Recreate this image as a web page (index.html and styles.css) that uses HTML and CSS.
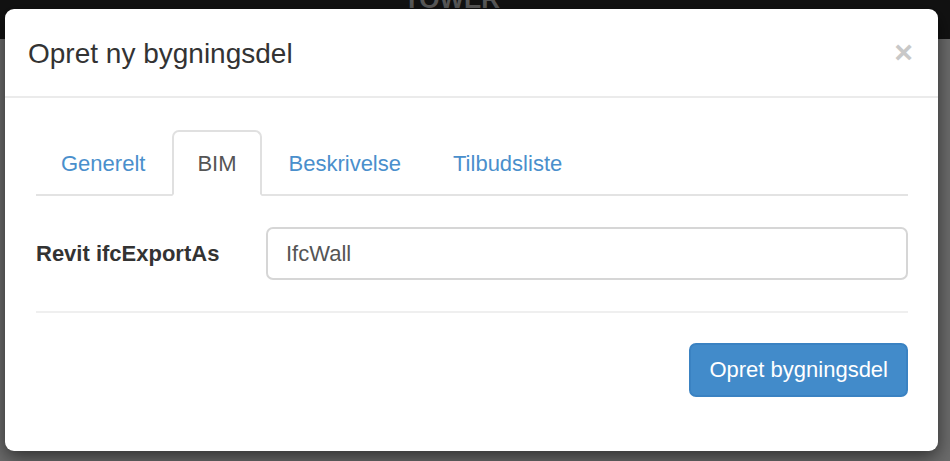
FILE: index.html
```html
<!DOCTYPE html>
<html lang="da">
<head>
<meta charset="utf-8">
<title>Opret ny bygningsdel</title>
<link rel="stylesheet" href="styles.css">
</head>
<body>
<div class="page">
  <div class="navbar"><span class="brand">TOWER</span></div>
  <div class="backdrop"></div>
</div>
<div class="modal">
  <div class="modal-header">
    <h4 class="modal-title">Opret ny bygningsdel</h4>
    <span class="close">&times;</span>
  </div>
  <div class="modal-body">
    <ul class="nav-tabs">
      <li><a>Generelt</a></li>
      <li class="active"><a>BIM</a></li>
      <li><a>Beskrivelse</a></li>
      <li><a>Tilbudsliste</a></li>
    </ul>
    <div class="tab-content">
      <div class="form-group">
        <label class="control-label">Revit ifcExportAs</label>
        <div class="form-control">IfcWall</div>
      </div>
    </div>
    <hr class="divider">
    <div class="modal-footer">
      <button class="btn-primary">Opret bygningsdel</button>
    </div>
  </div>
</div>
</body>
</html>
```

FILE: styles.css
```css
* { box-sizing: border-box; }
html, body { margin: 0; padding: 0; }
body {
  width: 950px;
  height: 461px;
  overflow: hidden;
  font-family: "Liberation Sans", Arial, sans-serif;
  background: #6b6b6b;
  position: relative;
}
.page { display: flex; flex-direction: column; height: 100%; }
.navbar {
  height: 39px;
  background: #121212;
  display: flex;
  justify-content: center;
  padding-right: 46px;
  overflow: hidden;
}
.brand {
  color: #5a5a5a;
  font-weight: bold;
  font-size: 26px;
  line-height: 26px;
  margin-top: -14px;
}
.backdrop { flex: 1; background: #6b6b6b; }

.modal {
  position: absolute;
  left: 5px;
  top: 9px;
  width: 933px;
  height: 442px;
  background: #fff;
  border-radius: 9px;
  box-shadow: 0 6px 18px rgba(0,0,0,0.55);
}
.modal-header {
  display: flex;
  justify-content: space-between;
  align-items: flex-start;
  padding: 25px 25px 22px 23px;
  border-bottom: 2px solid #ebebeb;
}
.modal-title {
  margin: 0;
  font-size: 28px;
  line-height: 40px;
  font-weight: normal;
  color: #333;
}
.close {
  font-size: 32px;
  font-weight: bold;
  line-height: 36px;
  color: #c8c8c8;
}
.modal-body {
  padding: 32px 30px 0 31px;
}
.nav-tabs {
  list-style: none;
  margin: 0;
  padding: 0;
  display: flex;
  border-bottom: 2px solid #e3e3e3;
}
.nav-tabs li {
  margin-right: 2px;
  margin-bottom: -2px;
}
.nav-tabs a {
  display: block;
  padding: 16px 23px 15px;
  font-size: 22px;
  line-height: 31px;
  color: #4a8fcc;
  border: 2px solid transparent;
  border-radius: 7px 7px 0 0;
}
.nav-tabs .active a {
  color: #555;
  background: #fff;
  border-color: #e0e0e0;
  border-bottom-color: #fff;
}
.tab-content { padding-top: 31px; }
.form-group {
  display: flex;
  align-items: center;
}
.control-label {
  width: 230px;
  flex: none;
  font-size: 22px;
  font-weight: bold;
  color: #333;
}
.form-control {
  flex: 1;
  height: 53px;
  border: 2px solid #d6d6d6;
  border-radius: 7px;
  padding: 0 18px;
  font-size: 22px;
  line-height: 49px;
  color: #555;
}
.divider {
  margin: 31px 0 0;
  border: 0;
  border-top: 2px solid #efefef;
}
.modal-footer {
  display: flex;
  justify-content: flex-end;
  padding-top: 30px;
}
.btn-primary {
  height: 54px;
  padding: 0 18px;
  font-family: "Liberation Sans", Arial, sans-serif;
  font-size: 22px;
  line-height: 50px;
  color: #fff;
  background: #428bca;
  border: 2px solid #3a82c2;
  border-radius: 7px;
}
```
